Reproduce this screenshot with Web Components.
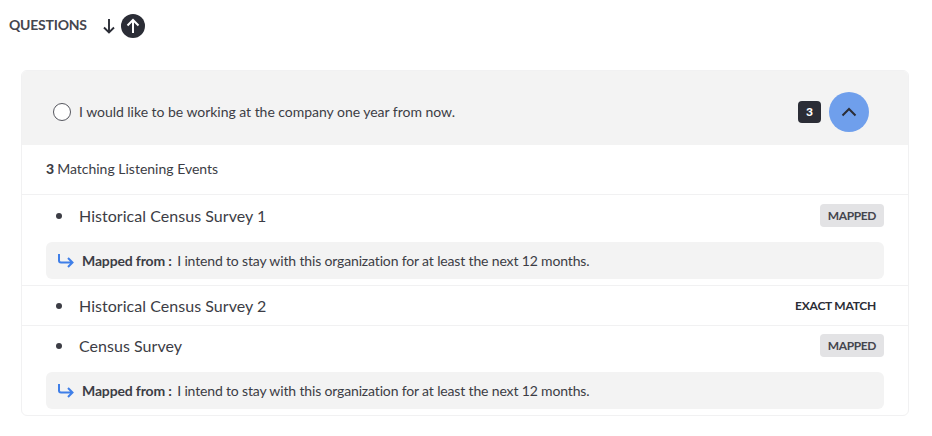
<!DOCTYPE html>
<html>
<head>
<meta charset="utf-8">
<style>
  html, body { margin: 0; background: #fff; }
  body { font-family: "Lato", "Liberation Sans", sans-serif; color: #3c3d45; }
</style>
</head>
<body>
<questions-page>
  <sort-header></sort-header>
  <question-card text="I would like to be working at the company one year from now." count="3">
    <event-row name="Historical Census Survey 1" status="mapped" from="I intend to stay with this organization for at least the next 12 months."></event-row>
    <event-row name="Historical Census Survey 2" status="exact"></event-row>
    <event-row name="Census Survey" status="mapped" from="I intend to stay with this organization for at least the next 12 months."></event-row>
  </question-card>
</questions-page>

<script>
class QuestionsPage extends HTMLElement {
  constructor() {
    super();
    this.shadowDOM = this.attachShadow({ mode: "open" });
  }

  connectedCallback() {
    this.shadowDOM.innerHTML = `
    <style>
    :host { display: block; width: 932px; height: 436px; box-sizing: border-box; padding: 14px 23px 0 9px; overflow: hidden; }
    </style>
    <slot></slot>
    `;
  }
}

class SortHeader extends HTMLElement {
  constructor() {
    super();
    this.shadowDOM = this.attachShadow({ mode: "open" });
  }

  connectedCallback() {
    this.shadowDOM.innerHTML = `
    <style>
    :host { display: flex; align-items: center; height: 24px; margin-bottom: 32px; }
    .label { font-size: 14px; font-weight: 700; color: #45464e; width: 92px; letter-spacing: -.22px; padding-bottom: 3px; }
    svg { display: block; }
    .up { margin-left: 4px; }
    </style>
    <span class="label">QUESTIONS</span>
    <svg width="16" height="16" viewBox="0 0 16 16" fill="none" stroke="#2b2d36" stroke-width="1.9" style="margin-top:-1px">
      <path d="M8 1v13.500M3 9.500l5 5 5-5"/>
    </svg>
    <svg class="up" width="24" height="24" viewBox="0 0 24 24">
      <circle cx="12" cy="12" r="12" fill="#2b2d36"/>
      <path d="M12 19V6M6.500 11.500L12 6l5.500 5.500" fill="none" stroke="#fff" stroke-width="2"/>
    </svg>
    `;
  }
}

class QuestionCard extends HTMLElement {
  constructor() {
    super();
    this.shadowDOM = this.attachShadow({ mode: "open" });
  }

  connectedCallback() {
    const count = this.getAttribute("count");
    this.shadowDOM.innerHTML = `
    <style>
    :host { display: block; margin-left: 12px; border: 1px solid #f1f1f2; border-radius: 6px; overflow: hidden; }
    .head { display: flex; align-items: center; box-sizing: border-box; height: 75px; margin: -1px -1px 0; padding: 8px 40px 0 32px; background: #f3f3f3; font-size: 14px; letter-spacing: -.03px; }
    .radio { box-sizing: border-box; width: 18px; height: 18px; border: 1px solid #55565e; border-radius: 50%; background: #fff; margin-right: 8px; }
    .text { flex: 1; }
    .count { width: 23px; height: 22px; border-radius: 4px; background: #2b2d36; color: #fff; font-size: 12px; font-weight: 900; display: flex; align-items: center; justify-content: center; margin-right: 8px; }
    .toggle { width: 40px; height: 40px; border-radius: 50%; background: #6f9fec; display: flex; align-items: center; justify-content: center; }
    .sum { box-sizing: border-box; height: 50px; display: flex; align-items: center; padding: 0 0 2px 24px; font-size: 14px; border-bottom: 1px solid #f1f1f2; }
    .sum b { font-weight: 900; margin-right: 3px; }
    </style>
    <div class="head">
      <span class="radio"></span>
      <span class="text">${this.getAttribute("text")}</span>
      <span class="count">${count}</span>
      <span class="toggle">
        <svg width="16" height="10" viewBox="0 0 16 10" fill="none" stroke="#2b2d36" stroke-width="2"><path d="M1.500 8.500L8 2l6.500 6.500"/></svg>
      </span>
    </div>
    <div class="sum"><b>${count}</b> Matching Listening Events</div>
    <slot></slot>
    `;
  }
}

class EventRow extends HTMLElement {
  constructor() {
    super();
    this.shadowDOM = this.attachShadow({ mode: "open" });
  }

  connectedCallback() {
    const mapped = this.getAttribute("status") === "mapped";
    const from = this.getAttribute("from");
    this.shadowDOM.innerHTML = `
    <style>
    :host { display: block; padding: 0 24px; border-bottom: 1px solid #f1f1f2; }
    :host(:last-child) { border-bottom: 0; }
    .top { display: flex; align-items: center; height: 39px; font-size: 16px; }
    .top.tall { height: 23px; padding: 9px 0 15px; }
    :host(:last-child) .top.tall { padding-top: 8px; }
    .dot { width: 6px; height: 6px; border-radius: 50%; background: #3c3d45; margin: 0 17px 0 10px; }
    .name { flex: 1; letter-spacing: .04px; }
    .tag { font-size: 12px; font-weight: 700; height: 23px; line-height: 23px; padding: 0 8px; border-radius: 4px; background: #e3e3e5; letter-spacing: -.4px; color: #45464e; }
    .tag.exact { background: none; color: #2b2d36; letter-spacing: -.25px; }
    .from { display: flex; align-items: center; height: 37px; margin-bottom: 6px; padding-left: 12px; border-radius: 6px; background: #f3f3f3; font-size: 14px; letter-spacing: -.15px; }
    .from svg { margin-right: 8px; }
    .from b { font-weight: 700; margin-right: 2px; }
    </style>
    <div class="top ${mapped ? "tall" : ""}">
      <span class="dot"></span>
      <span class="name">${this.getAttribute("name")}</span>
      <span class="tag ${mapped ? "" : "exact"}">${mapped ? "MAPPED" : "EXACT MATCH"}</span>
    </div>
    ${from ? `<div class="from">
      <svg width="16" height="14" viewBox="0 0 16 14" fill="none" stroke="#3f7fe8" stroke-width="2"><path d="M1 0v6.500a2 2 0 0 0 2 2h11.500M10 4l4.500 4.500L10 13"/></svg>
      <span><b>Mapped from :</b> ${from}</span>
    </div>` : ""}
    `;
  }
}

customElements.define("questions-page", QuestionsPage);
customElements.define("sort-header", SortHeader);
customElements.define("question-card", QuestionCard);
customElements.define("event-row", EventRow);
</script>
</body>
</html>
